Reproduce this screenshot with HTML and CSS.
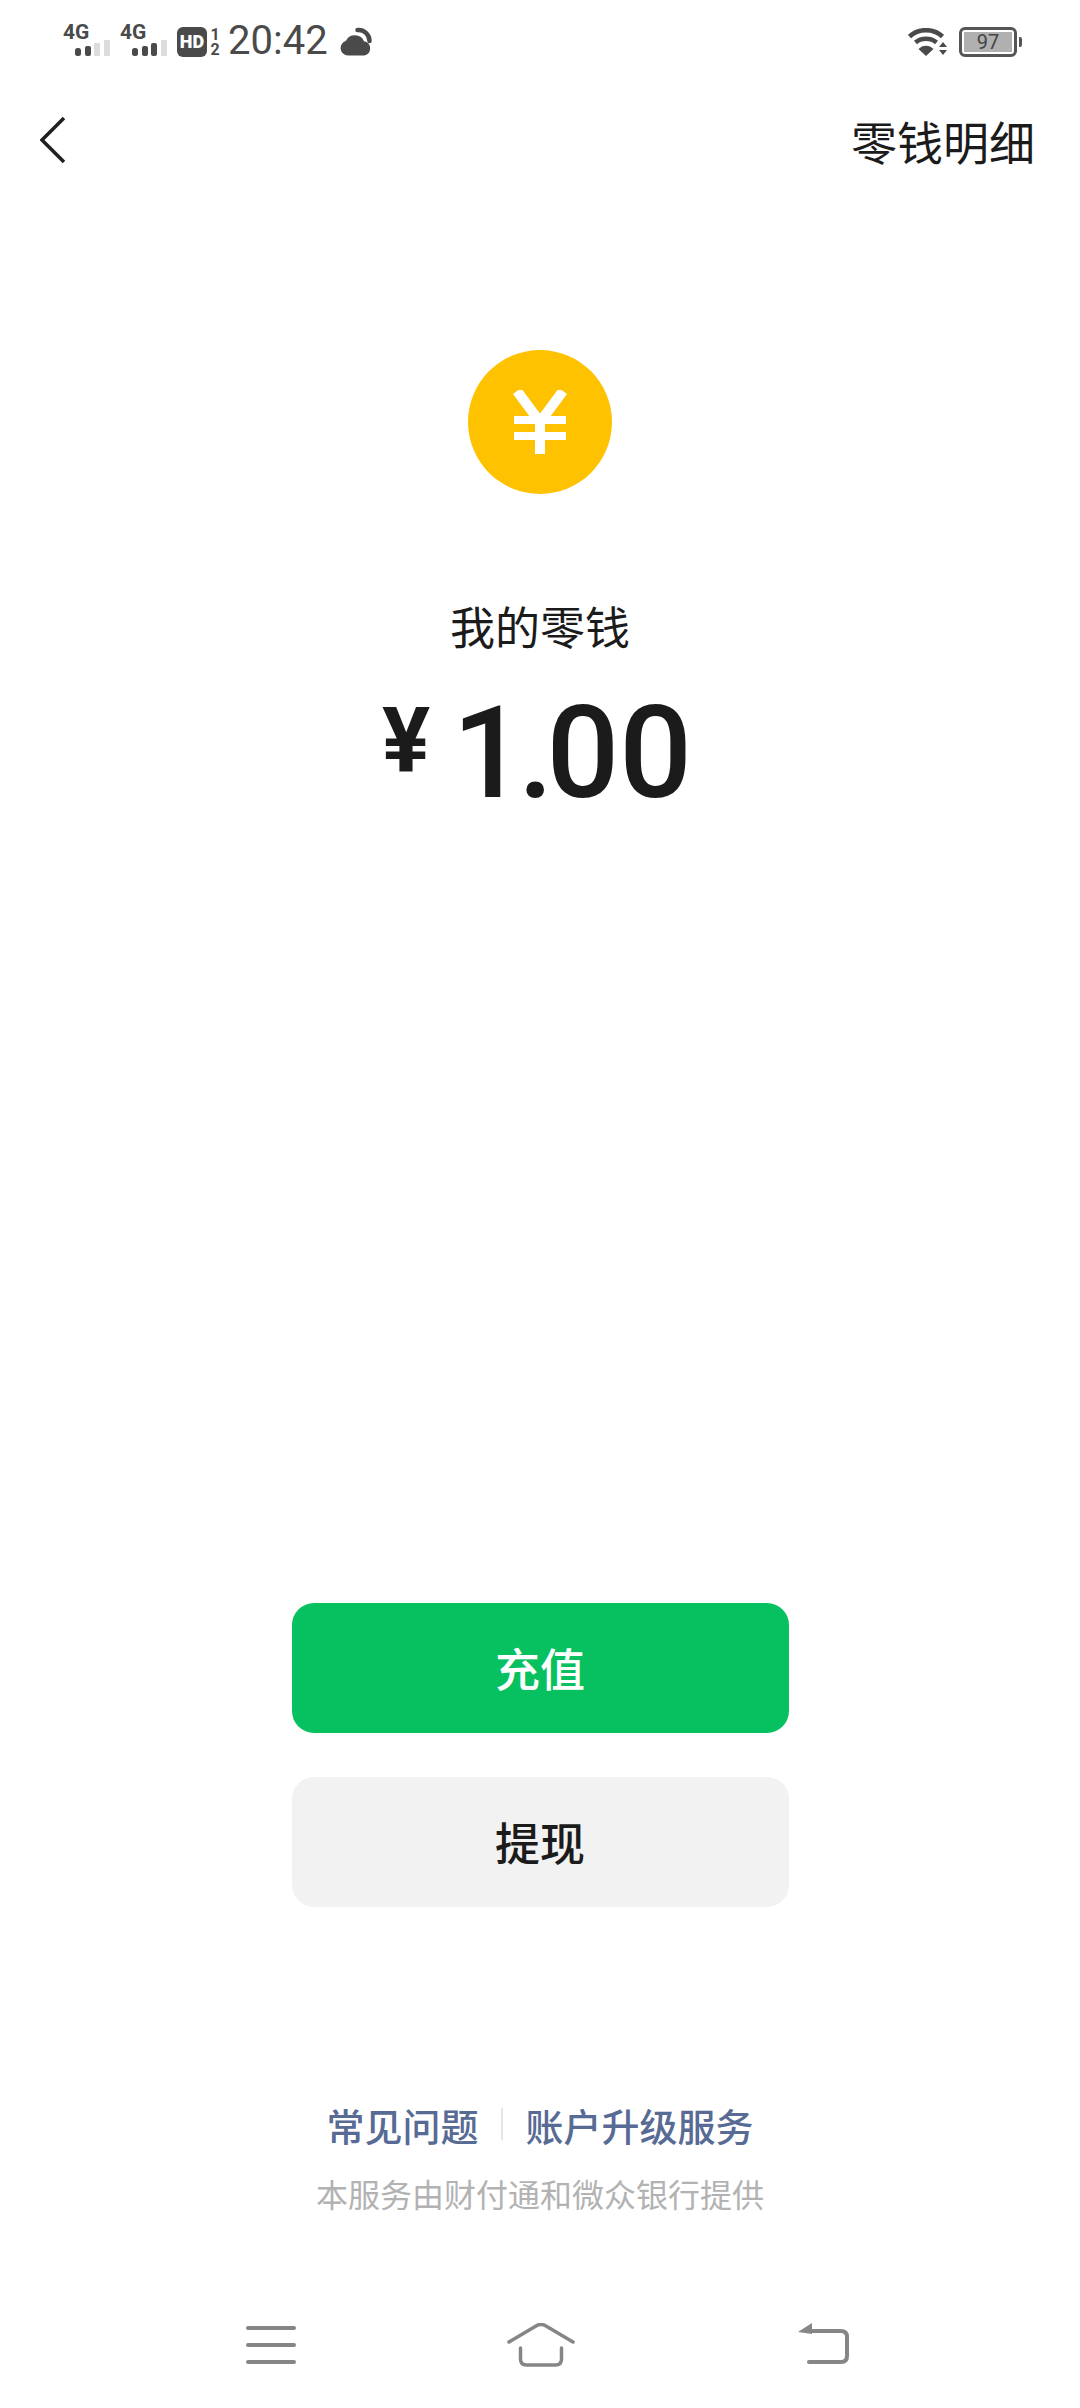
FILE: index.html
```html
<!DOCTYPE html>
<html lang="zh-CN">
<head>
  <meta charset="UTF-8">
  <meta name="viewport" content="width=device-width, initial-scale=1.0">
  <title>我的零钱</title>
  <link rel="stylesheet" href="styles.css">
</head>
<body>
  <div class="page">
    <div class="statusbar">
      <div class="status-left">
        <div class="sim">
          <span class="sim-type">4G</span>
          <svg class="sim-bars" width="35" height="16" viewBox="0 0 35 16">
            <rect x="0" y="8" width="6" height="8" rx="2.5" fill="#4a4a4a"/>
            <rect x="10" y="6" width="6" height="10" rx="2" fill="#4a4a4a"/>
            <rect x="19" y="3" width="6" height="13" rx="1" fill="#dcdcdc"/>
            <rect x="29" y="0" width="6" height="16" rx="1" fill="#dcdcdc"/>
          </svg>
        </div>
        <div class="sim">
          <span class="sim-type">4G</span>
          <svg class="sim-bars" width="35" height="16" viewBox="0 0 35 16">
            <rect x="0" y="8" width="6" height="8" rx="2.5" fill="#4a4a4a"/>
            <rect x="10" y="6" width="6" height="10" rx="2" fill="#4a4a4a"/>
            <rect x="19" y="3" width="6" height="13" rx="2" fill="#4a4a4a"/>
            <rect x="29" y="0" width="6" height="16" rx="1" fill="#dcdcdc"/>
          </svg>
        </div>
        <span class="hd">HD</span>
        <span class="hd-slots"><span>1</span><span>2</span></span>
        <span class="clock">20:42</span>
        <svg class="weather" width="32" height="30" viewBox="0 0 32 30">
          <path d="M8 28.500a7.500 7.500 0 0 1-2-14.700A10 10 0 0 1 24 14.200 7.300 7.300 0 0 1 24.500 28.500z" fill="#4a4a4a"/>
          <path d="M17.500 3A11 11 0 0 1 29.500 14" fill="none" stroke="#4a4a4a" stroke-width="4.500" stroke-linecap="round"/>
        </svg>
      </div>
      <div class="status-right">
        <svg class="wifi" width="40" height="28" viewBox="0 0 40 28">
          <path d="M1.500 8.500C10.500 0 25.500 0 34.500 8.500" fill="none" stroke="#4a4a4a" stroke-width="4.500"/>
          <path d="M7.500 14.500C13 9.500 23 9.500 28.500 14.500" fill="none" stroke="#4a4a4a" stroke-width="4.500"/>
          <path d="M10.500 21C14.500 16.500 21.500 16.500 25.500 21L18 28z" fill="#4a4a4a"/>
          <path d="M31 19l4-5 4 5zM31 22h8l-4 5z" fill="#4a4a4a"/>
        </svg>
        <div class="battery"><span class="battery-level">97</span></div>
      </div>
    </div>

    <div class="topbar">
      <svg class="back" width="26" height="48" viewBox="0 0 26 48">
        <path d="M24 2L2 24l22 22" fill="none" stroke="#1f1f1f" stroke-width="3.500"/>
      </svg>
      <span class="topbar-link">零钱明细</span>
    </div>

    <div class="balance">
      <div class="coin">
        <svg width="56" height="64" viewBox="0 0 56 64">
          <path d="M5 1l23 31L51 1" fill="none" stroke="#fff" stroke-width="10"/>
          <path d="M2 30h52M2 46h52" fill="none" stroke="#fff" stroke-width="8"/>
          <path d="M28 30v34" fill="none" stroke="#fff" stroke-width="10"/>
        </svg>
      </div>
      <div class="balance-label">我的零钱</div>
      <div class="amount">
        <span class="amount-unit">¥</span>
        <span class="amount-value"><span class="amount-lead">1.</span>00</span>
      </div>
    </div>

    <div class="actions">
      <div class="btn btn-primary">充值</div>
      <div class="btn btn-default">提现</div>
    </div>

    <div class="footer">
      <div class="footer-links">
        <span>常见问题</span>
        <i class="footer-sep"></i>
        <span>账户升级服务</span>
      </div>
      <div class="footer-note">本服务由财付通和微众银行提供</div>
    </div>

    <div class="navbar">
      <svg width="50" height="44" viewBox="0 0 50 44">
        <path d="M2 5h46M2 22h46M2 39h46" fill="none" stroke="#868686" stroke-width="4" stroke-linecap="round"/>
      </svg>
      <svg class="nav-home" width="68" height="44" viewBox="0 0 68 44">
        <path d="M2 19L29 3q5-3 10 0l27 16" fill="none" stroke="#868686" stroke-width="3.500" stroke-linecap="round"/>
        <path d="M13.500 25v11q0 6 6 6h29q6 0 6-6V25" fill="none" stroke="#868686" stroke-width="3.500" stroke-linecap="round"/>
      </svg>
      <svg width="52" height="44" viewBox="0 0 52 44">
        <path d="M12 8h31q6 0 6 6v19q0 6-6 6H11" fill="none" stroke="#868686" stroke-width="4" stroke-linecap="round"/>
        <path d="M0 9L14 0v11z" fill="#868686"/>
      </svg>
    </div>
  </div>
</body>
</html>
```

FILE: styles.css
```css
* { box-sizing: border-box; }
body { margin: 0; background: #fff; font-family: "Noto Sans CJK SC", "Noto Sans", sans-serif; color: #1b1b1b; }
.page { width: 1080px; height: 2408px; display: flex; flex-direction: column; overflow: hidden; background: #fff; }

/* status bar */
.statusbar { height: 84px; padding: 25px 63px 0 63px; display: flex; justify-content: space-between; align-items: flex-start; color: #4a4a4a; font-family: Roboto, sans-serif; }
.status-left { display: flex; align-items: flex-start; }
.status-right { display: flex; align-items: flex-start; padding-top: 2px; }
.sim { width: 57px; display: flex; flex-direction: column; }
.sim-type { font-size: 21px; font-weight: 700; line-height: 15px; height: 15px; }
.sim-bars { margin-left: 12px; }
.hd { width: 30px; height: 30px; margin-top: 2px; background: #4a4a4a; border-radius: 6px; color: #fff; font-size: 18px; font-weight: 900; line-height: 30px; text-align: center; }
.hd-slots { width: 12px; margin: 2px 0 0 2px; display: flex; flex-direction: column; align-items: center; font-size: 16px; font-weight: 700; line-height: 15px; }
.clock { margin: -2px 0 0 7px; font-size: 40px; line-height: 36px; }
.weather { margin: 2px 0 0 12px; }
.wifi { margin-top: 1px; }
.battery { position: relative; width: 58px; height: 30px; margin-left: 11px; padding: 2px; border: 3px solid #555; border-radius: 6px; }
.battery::after { content: ""; position: absolute; right: -8px; top: 7px; width: 3px; height: 10px; background: #555; border-radius: 0 2px 2px 0; }
.battery-level { display: block; height: 20px; background: #b0b0b0; font-size: 20px; line-height: 20px; text-align: center; color: #444; }

/* top bar */
.topbar { height: 112px; padding: 0 45px 0 40px; display: flex; justify-content: space-between; align-items: center; }
.topbar-link { font-size: 46px; line-height: 60px; }

/* balance */
.balance { display: flex; flex-direction: column; align-items: center; }
.coin { width: 144px; height: 144px; margin-top: 154px; background: #fec200; border-radius: 50%; display: flex; justify-content: center; align-items: center; }
.balance-label { margin-top: 102px; font-size: 45px; line-height: 60px; }
.amount { margin-top: 32px; padding-right: 6px; display: flex; align-items: flex-start; font-family: Roboto, sans-serif; height: 130px; }
.amount-unit { font-size: 90px; font-weight: 700; line-height: 100px; margin: 4px 22px 0 0; }
.amount-value { font-size: 128px; font-weight: 500; line-height: 130px; }
.amount-lead { letter-spacing: -7px; }

/* buttons */
.actions { margin-top: 785px; display: flex; flex-direction: column; align-items: center; gap: 44px; }
.btn { width: 497px; height: 130px; border-radius: 22px; font-size: 45px; font-weight: 500; line-height: 130px; text-align: center; }
.btn-primary { background: #07c160; color: #fff; }
.btn-default { background: #f2f2f2; color: #1b1b1b; }

/* footer */
.footer { margin-top: 192px; display: flex; flex-direction: column; align-items: center; }
.footer-links { display: flex; align-items: center; height: 50px; font-size: 38px; font-weight: 500; color: #576b95; }
.footer-sep { width: 2px; height: 32px; margin: 0 23px 0 22px; background: #e5e5e5; }
.footer-note { margin-top: 22px; font-size: 32px; line-height: 44px; color: #b2b2b2; }

/* system nav */
.navbar { margin-top: 108px; padding: 0 230px 0 246px; display: flex; justify-content: space-between; align-items: flex-start; }
.nav-home { margin-right: 12px; }
```
